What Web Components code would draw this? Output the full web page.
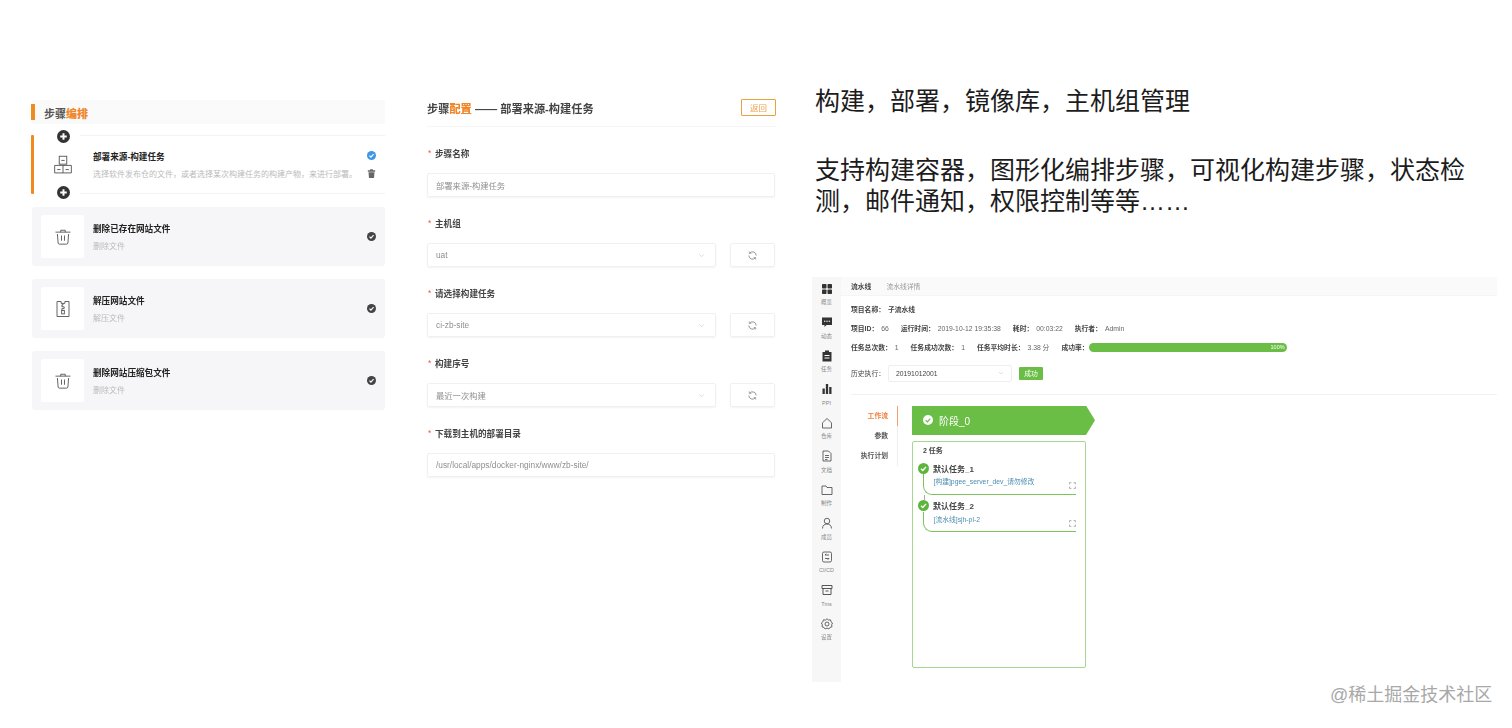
<!DOCTYPE html>
<html lang="zh-CN">
<head>
<meta charset="utf-8">
<title>构建，部署</title>
<style>
  html, body { margin: 0; height: 100%; background: #fff; overflow: hidden; }
  body { font-family: "Liberation Sans", "Noto Sans CJK SC", sans-serif; }
  .page { display: flex; height: 728px; padding-left: 31px; box-sizing: border-box; }
</style>
</head>
<body>
<div class="page">
  <step-panel>
    <step-card active icon="tree" title="部署来源-构建任务" sub="选择软件发布仓的文件，或者选择某次构建任务的构建产物，来进行部署。"></step-card>
    <step-card icon="trash" title="删除已存在网站文件" sub="删除文件"></step-card>
    <step-card icon="zip" title="解压网站文件" sub="解压文件"></step-card>
    <step-card icon="trash" title="删除网站压缩包文件" sub="删除文件"></step-card>
  </step-panel>
  <config-panel>
    <form-field label="步骤名称" value="部署来源-构建任务"></form-field>
    <form-field label="主机组" value="uat" select></form-field>
    <form-field label="请选择构建任务" value="ci-zb-site" select></form-field>
    <form-field label="构建序号" value="最近一次构建" select></form-field>
    <form-field label="下载到主机的部署目录" value="/usr/local/apps/docker-nginx/www/zb-site/"></form-field>
  </config-panel>
  <intro-panel>
    <span slot="head">构建，部署，镜像库，主机组管理</span>
    <span slot="text">支持构建容器，图形化编排步骤，可视化构建步骤，状态检测，邮件通知，权限控制等等……</span>
    <pipeline-shot></pipeline-shot>
  </intro-panel>
</div>
<water-mark>@稀土掘金技术社区</water-mark>

<script>
const svg = (body, size, extra = '') => `<svg width="${size}" height="${size}" viewBox="0 0 24 24" fill="none" ${extra}>${body}</svg>`;

const icons = {
  tree: '<g stroke="#555" stroke-width="1.1"><rect x="7.500" y="1.500" width="9" height="9.500"/><path d="M10 6.500h4"/><path d="M2 12.500h20v9H2zM12 12.500v9"/><path d="M5 17.500h4M15 17.500h4"/></g>',
  trash: '<g stroke="#555" stroke-width="1.2"><path d="M2 5.500h20M9 5.500V3h6v2.500"/><path d="M4.500 8l1 12q.2 1.500 1.700 1.500h9.600q1.500 0 1.700-1.500l1-12"/><path d="M10 10v7M14 10v7"/></g>',
  zip: '<g stroke="#555" stroke-width="1.2"><path d="M4 2h5.500v2.500h5V2H20v20H4z"/><path d="M12 4.500v2h-1.500v2.500h3v2.500h-3v2"/><rect x="10.200" y="14" width="3.600" height="4.500"/></g>',
  plus: '<circle cx="12" cy="12" r="12" fill="#333"/><path d="M12 6v12M6 12h12" stroke="#fff" stroke-width="3.600"/>',
  check: c => `<circle cx="12" cy="12" r="12" fill="${c}"/><path d="M6.500 12.500l4 4 7-8" stroke="#fff" stroke-width="3"/>`,
  bin: '<path d="M4 5h16v3H4zM9 2.500h6V5H9zM5.500 9.500h13L17.500 22h-11z" fill="#666"/>',
  refresh: '<g stroke="#777" stroke-width="1.700"><path d="M20 12a8 8 0 0 0-14-5.300"/><path d="M4 12a8 8 0 0 0 14 5.300"/><path d="M5 3v4.500h4.500M19 21v-4.500h-4.500" stroke-width="1.300"/></g>',
  chevron: '<path d="M4 8l8 8 8-8" stroke="#bbb" stroke-width="1.800"/>',
  grid: '<g fill="#333"><rect x="2" y="2" width="9" height="9" rx="1.500"/><rect x="13" y="2" width="9" height="9" rx="1.500"/><rect x="2" y="13" width="9" height="9" rx="1.500"/><rect x="13" y="13" width="9" height="9" rx="1.500"/></g>',
  chat: '<path d="M2 3h20v15H11l-4 4v-4H2z" fill="#333"/><g fill="#fff"><circle cx="7.500" cy="10.500" r="1.400"/><circle cx="12" cy="10.500" r="1.400"/><circle cx="16.500" cy="10.500" r="1.400"/></g>',
  task: '<path d="M3 4h18v19H3z" fill="#333"/><rect x="8" y="1" width="8" height="5" fill="#333"/><path d="M7 11h10M7 16h10" stroke="#fff" stroke-width="2"/>',
  bars: '<g fill="#333"><rect x="3" y="11" width="4.600" height="11"/><rect x="9.700" y="2" width="4.600" height="20"/><rect x="16.400" y="8" width="4.600" height="14"/></g>',
  home: '<path d="M3 11.500 12 3l9 8.500V22H3z" stroke="#444" stroke-width="1.600" stroke-linejoin="round"/>',
  doc: '<g stroke="#444" stroke-width="1.600"><path d="M4 2h11l5 5v15H4z"/><path d="M8 11h8M8 15h8M8 19h5"/></g>',
  folder: '<path d="M2 4h8l2 3h10v14H2z" stroke="#444" stroke-width="1.600" stroke-linejoin="round"/>',
  user: '<g stroke="#444" stroke-width="1.600"><circle cx="12" cy="8" r="5.500"/><path d="M3 23c0-6 4-9 9-9s9 3 9 9"/></g>',
  ci: '<g stroke="#444" stroke-width="1.600"><rect x="3" y="2" width="18" height="20" rx="3"/><path d="M16 8H8l2.500-2.500M8 15h8l-2.500 2.500"/></g>',
  box: '<g stroke="#444" stroke-width="1.800"><path d="M2 3h20v6H2zM4 9v12h16V9"/><path d="M9 14h6"/></g>',
  gear: '<g stroke="#444" stroke-width="1.600"><path d="M12 1.500l3 2.600 4-.4 1 3.900 3 2.400-1.700 3.700.7 3.900-3.900 1.100-2.400 3.300-3.700-1.800-3.700 1.800-2.400-3.300-3.900-1.100.7-3.900L.8 10l3-2.400 1-3.900 4 .4z"/><circle cx="12" cy="12" r="4"/></g>',
  expand: '<path d="M2 8V2h6M16 2h6v6M22 16v6h-6M8 22H2v-6" stroke="#777" stroke-width="2"/>'
};

class StepPanel extends HTMLElement {
  constructor() { super(); this.attachShadow({ mode: 'open' }); }
  connectedCallback() {
    this.shadowRoot.innerHTML = `
      <style>
        :host { display: block; width: 354px; margin-top: 100px; filter: blur(.5px); color: #333; }
        header { display: flex; align-items: center; height: 24px; background: #fafafa; margin-left: 1px; margin-bottom: 11px; position: relative; }
        header i { width: 4px; height: 16px; background: #ee8a1f; margin-left: -1px; }
        h2 { margin: 3px 0 0 9px; font-size: 11px; line-height: 16px; font-weight: 700; color: #555; }
        h2 b { color: #f0862a; }
        .list { display: flex; flex-direction: column; gap: 13px; }
      </style>
      <header><i></i><h2>步骤<b>编排</b></h2></header>
      <div class="list"><slot></slot></div>`;
  }
}

class StepCard extends HTMLElement {
  constructor() { super(); this.attachShadow({ mode: 'open' }); }
  connectedCallback() {
    const active = this.hasAttribute('active');
    const kind = icons[this.getAttribute('icon')];
    this.shadowRoot.innerHTML = `
      <style>
        :host { display: flex; height: 59px; box-sizing: border-box; margin-left: 1px; padding: 9px 9px; gap: 9px; background: #f6f6f8; border-radius: 3px; align-items: center; position: relative; }
        :host([active]) { background: #fff; border-radius: 0; }
        .box { width: 43px; height: 43px; flex: none; background: #fff; border-radius: 2px; display: flex; align-items: center; justify-content: center; }
        .text { flex: 1; min-width: 0; margin-top: 3px; }
        .t { font-size: 8.600px; line-height: 17px; font-weight: 700; color: #222; white-space: nowrap; }
        .s { font-size: 8px; line-height: 17px; color: #bbb; white-space: nowrap; }
        .acts { width: 10px; flex: none; display: flex; flex-direction: column; gap: 8px; align-items: center; }
        .bar { position: absolute; left: -1px; top: 0; bottom: 0; width: 3px; background: #ee8a1f; border-radius: 1px; }
        .rule { position: absolute; left: 48px; right: 0; height: 1px; background: #f3f3f3; }
        .plus { position: absolute; left: 24.500px; width: 13px; height: 13px; z-index: 1; display: flex; }
      </style>
      ${active ? `<span class="bar"></span><span class="rule" style="top:0"></span><span class="rule" style="bottom:0"></span>
        <span class="plus" style="top:-5px">${svg(icons.plus, 13)}</span><span class="plus" style="bottom:-5px">${svg(icons.plus, 13)}</span>` : ''}
      <div class="box">${svg(kind, active ? 20 : 18)}</div>
      <div class="text"><div class="t">${this.getAttribute('title')}</div><div class="s">${this.getAttribute('sub')}</div></div>
      <div class="acts">${active
        ? svg(icons.check('#3d97e8'), 9) + svg(icons.bin, 11)
        : svg(icons.check('#444'), 9)}</div>`;
  }
}

class ConfigPanel extends HTMLElement {
  constructor() { super(); this.attachShadow({ mode: 'open' }); }
  connectedCallback() {
    this.shadowRoot.innerHTML = `
      <style>
        :host { display: block; width: 349px; margin-left: 42px; margin-top: 99px; filter: blur(.5px); }
        header { display: flex; align-items: center; justify-content: space-between; height: 28px; box-sizing: border-box; padding-bottom: 10px; border-bottom: 1px solid #f6f6f6; margin-bottom: 17px; }
        h2 { margin: 0; font-size: 11.200px; line-height: 17px; font-weight: 700; color: #444; white-space: nowrap; padding-top: 3px; }
        h2 b { color: #f0862a; }
        button { width: 35px; height: 17px; padding: 0; border: 1px solid #eaa23e; border-radius: 1px; background: #fff; color: #eda04a; font: 8.500px/15px "Noto Sans CJK SC", sans-serif; }
      </style>
      <header><h2>步骤<b>配置</b> —— 部署来源-构建任务</h2><button>返回</button></header>
      <slot></slot>`;
  }
}

class FormField extends HTMLElement {
  constructor() { super(); this.attachShadow({ mode: 'open' }); }
  connectedCallback() {
    const select = this.hasAttribute('select');
    this.shadowRoot.innerHTML = `
      <style>
        :host { display: block; height: 70px; }
        label { display: flex; height: 18px; align-items: center; font-size: 8.600px; font-weight: 700; color: #444; white-space: nowrap; margin-bottom: 11px; }
        label i { color: #e8604c; font-style: normal; width: 7px; margin-left: 1px; font-weight: 400; }
        .row { display: flex; gap: 14px; padding-right: 1px; }
        .input { flex: 1; height: 24px; box-sizing: border-box; border: 1px solid #f0f0f0; border-radius: 2px; box-shadow: 0 1px 2px rgba(0,0,0,.05); display: flex; align-items: center; justify-content: space-between; padding: 0 10px 0 8px; font-size: 8.300px; color: #8f8f8f; background: #fff; }
        .btn { width: 45px; height: 24px; flex: none; box-sizing: border-box; border: 1px solid #f0f0f0; border-radius: 2px; box-shadow: 0 1px 2px rgba(0,0,0,.05); display: flex; align-items: center; justify-content: center; }
      </style>
      <label><i>*</i>${this.getAttribute('label')}</label>
      <div class="row">
        <div class="input"><span>${this.getAttribute('value')}</span>${select ? svg(icons.chevron, 7) : ''}</div>
        ${select ? `<div class="btn">${svg(icons.refresh, 11)}</div>` : ''}
      </div>`;
  }
}

class IntroPanel extends HTMLElement {
  constructor() { super(); this.attachShadow({ mode: 'open' }); }
  connectedCallback() {
    this.shadowRoot.innerHTML = `
      <style>
        :host { display: block; width: 685px; margin-left: 36px; margin-top: 86px; color: #1c1c1c; }
        .head, .text { margin-left: 3px; font-size: 25px; line-height: 31px; width: 660px; }
        .text { margin-top: 38px; margin-bottom: 60px; }
      </style>
      <div class="head"><slot name="head"></slot></div>
      <div class="text"><slot name="text"></slot></div>
      <slot></slot>`;
  }
}

class SideItem extends HTMLElement {
  constructor() { super(); this.attachShadow({ mode: 'open' }); }
  connectedCallback() {
    this.shadowRoot.innerHTML = `
      <style>
        :host { display: flex; flex-direction: column; align-items: center; height: 33.500px; }
        .i { height: 14px; display: flex; align-items: center; margin-bottom: 1.500px; }
        .l { font-size: 5.500px; line-height: 10px; color: #888; white-space: nowrap; }
      </style>
      <div class="i">${svg(icons[this.getAttribute('icon')], 12)}</div>
      <div class="l">${this.getAttribute('label')}</div>`;
  }
}

class TaskItem extends HTMLElement {
  constructor() { super(); this.attachShadow({ mode: 'open' }); }
  connectedCallback() {
    this.shadowRoot.innerHTML = `
      <style>
        :host { display: block; width: 153px; margin-left: 10px; }
        .head { display: flex; align-items: center; height: 12px; margin-left: -5px; gap: 4px; font-size: 8px; font-weight: 700; color: #444; white-space: nowrap; }
        .body { height: 19.500px; border-left: 1.500px solid #7cc35c; border-bottom: 1.500px solid #7cc35c; border-bottom-left-radius: 9px; display: flex; justify-content: space-between; padding-left: 9.500px; font-size: 6.800px; line-height: 15px; color: #4b8db0; white-space: nowrap; }
        .body svg { margin-top: 8px; }
        .conn { height: 5px; border-left: 1px solid #aaa; margin-left: .5px; }
      </style>
      <div class="head">${svg(icons.check('#5db53c'), 11)}<span>${this.getAttribute('name')}</span></div>
      <div class="body"><span>${this.getAttribute('link')}</span>${svg(icons.expand, 7)}</div>
      ${this.hasAttribute('connect') ? '<div class="conn"></div>' : ''}`;
  }
}

class PipelineShot extends HTMLElement {
  constructor() { super(); this.attachShadow({ mode: 'open' }); }
  connectedCallback() {
    this.shadowRoot.innerHTML = `
      <style>
        :host { display: flex; height: 405px; font-size: 6.800px; color: #666; filter: blur(.3px); }
        b { font-weight: 700; color: #444; }
        .side { width: 29px; flex: none; background: #f7f7f7; padding-top: 4.500px; box-sizing: border-box; }
        .main { flex: 1; min-width: 0; }
        .top { height: 18px; background: #fafafa; box-shadow: 0 1px 1px rgba(0,0,0,.04); display: flex; align-items: center; padding-left: 10px; gap: 15px; color: #999; margin-bottom: 4.500px; }
        .row { display: flex; align-items: center; gap: 12px; height: 19px; padding-left: 10px; white-space: nowrap; }
        .row span b { margin-right: 3px; }
        .progress { width: 198px; height: 9px; border-radius: 5px; background: #6abd45; color: #fff; font-size: 5.500px; line-height: 9px; text-align: right; padding-right: 2px; box-sizing: border-box; margin-left: -12px; }
        .hist { height: 33px; gap: 7px; }
        .hist > span { color: #444; margin-right: -4px; }
        .sel { width: 124px; height: 17px; box-sizing: border-box; border: 1px solid #eee; border-radius: 2px; display: flex; align-items: center; justify-content: space-between; padding: 0 7px; color: #444; }
        .ok { width: 24px; height: 13px; background: #6abd45; color: #fff; border-radius: 1px; text-align: center; line-height: 13px; }
        hr { border: 0; height: 1px; background: #f2f2f2; margin: 4px 0 11px 10px; }
        .flow { display: flex; align-items: flex-start; }
        .tabs { width: 57px; height: 60px; flex: none; box-sizing: border-box; margin-right: 14px; }
        .tab { height: 20px; line-height: 20px; text-align: right; padding-right: 9px; border-right: 1px solid #eee; font-weight: 700; color: #555; }
        .tab.on { color: #ef7f3a; border-right-color: #f2a06d; }
        .stage { width: 183px; height: 29.500px; background: #6abd45; clip-path: polygon(0 0, 174px 0, 100% 50%, 174px 100%, 0 100%); display: flex; align-items: center; padding-left: 11px; gap: 6px; box-sizing: border-box; color: #fff; font-size: 10px; }
        .box { width: 174px; height: 227.500px; margin-top: 5.500px; box-sizing: border-box; border: 1px solid #a6d78f; border-radius: 2px; padding-top: 3px; }
        .count { height: 12px; line-height: 12px; padding-left: 10px; margin-bottom: 5.500px; font-weight: 700; color: #444; font-size: 7px; }
      </style>
      <div class="side">
        <side-item icon="grid" label="概览"></side-item>
        <side-item icon="chat" label="动态"></side-item>
        <side-item icon="task" label="任务"></side-item>
        <side-item icon="bars" label="PPI"></side-item>
        <side-item icon="home" label="仓库"></side-item>
        <side-item icon="doc" label="文档"></side-item>
        <side-item icon="folder" label="制作"></side-item>
        <side-item icon="user" label="成员"></side-item>
        <side-item icon="ci" label="CI/CD"></side-item>
        <side-item icon="box" label="Tms"></side-item>
        <side-item icon="gear" label="设置"></side-item>
      </div>
      <div class="main">
        <div class="top"><b>流水线</b><span>流水线详情</span></div>
        <div class="row"><span><b>项目名称：</b><b>子流水线</b></span></div>
        <div class="row">
          <span><b>项目ID：</b>66</span><span><b>运行时间：</b>2019-10-12 19:35:38</span><span><b>耗时：</b>00:03:22</span><span><b>执行者：</b>Admin</span>
        </div>
        <div class="row">
          <span><b>任务总次数：</b>1</span><span><b>任务成功次数：</b>1</span><span><b>任务平均时长：</b>3.38 分</span><b style="margin:0">成功率：</b><div class="progress">100%</div>
        </div>
        <div class="row hist">
          <span>历史执行：</span>
          <div class="sel"><span>20191012001</span>${svg(icons.chevron, 6)}</div>
          <div class="ok">成功</div>
        </div>
        <hr>
        <div class="flow">
          <div class="tabs"><div class="tab on">工作流</div><div class="tab">参数</div><div class="tab">执行计划</div></div>
          <div>
            <div class="stage">${svg('<circle cx="12" cy="12" r="12" fill="#fff"/><path d="M6.500 12.500l4 4 7-8" stroke="#6abd45" stroke-width="3"/>', 10)}<span>阶段_0</span></div>
            <div class="box">
              <div class="count">2 任务</div>
              <task-item connect name="默认任务_1" link="[构建]pgee_server_dev_请勿修改"></task-item>
              <task-item name="默认任务_2" link="[流水线]sjh-pl-2"></task-item>
            </div>
          </div>
        </div>
      </div>`;
  }
}

class WaterMark extends HTMLElement {
  constructor() { super(); this.attachShadow({ mode: 'open' }); }
  connectedCallback() {
    this.shadowRoot.innerHTML = `
      <style>
        :host { display: block; position: absolute; left: 1330px; top: 683px; font-size: 18px; line-height: 24px; color: #a8a8a8; white-space: nowrap; }
      </style>
      <slot></slot>`;
  }
}

customElements.define('step-panel', StepPanel);
customElements.define('step-card', StepCard);
customElements.define('config-panel', ConfigPanel);
customElements.define('form-field', FormField);
customElements.define('intro-panel', IntroPanel);
customElements.define('side-item', SideItem);
customElements.define('task-item', TaskItem);
customElements.define('pipeline-shot', PipelineShot);
customElements.define('water-mark', WaterMark);
</script>
</body>
</html>
